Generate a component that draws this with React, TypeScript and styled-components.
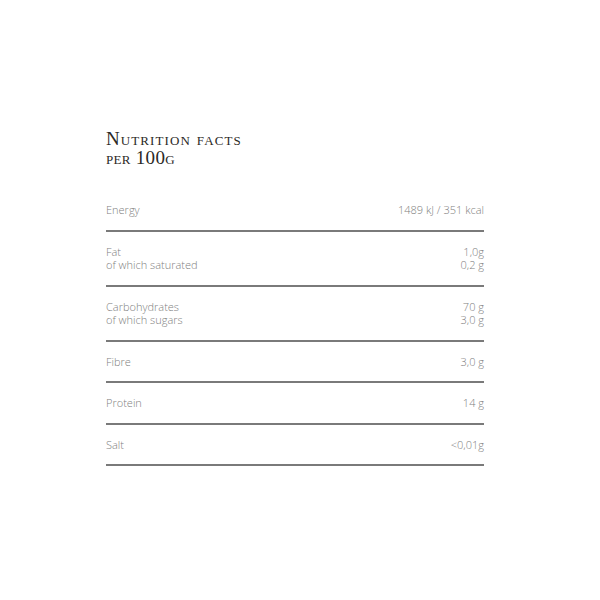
import React from "react";
import styled, { createGlobalStyle } from "styled-components";

const rows = [
  { items: [["Energy", "1489 kJ / 351 kcal"]] },
  { items: [["Fat", "1,0g"], ["of which saturated", "0,2 g"]] },
  { items: [["Carbohydrates", "70 g"], ["of which sugars", "3,0 g"]] },
  { items: [["Fibre", "3,0 g"]] },
  { items: [["Protein", "14 g"]] },
  { items: [["Salt", "<0,01g"]] },
];

export default () => {
  return (
    <>
      <GlobalStyle />
      <Page>
        <Card>
          <Title>
            <TitleLine $spacing={1.1}>Nutrition facts</TitleLine>
            <TitleLine $spacing={0.3}>per 100g</TitleLine>
          </Title>
          <Table>
            {rows.map((row, i) => (
              <Row key={i}>
                {row.items.map(([label, value]) => (
                  <Line key={label}>
                    <span>{label}</span>
                    <span>{value}</span>
                  </Line>
                ))}
              </Row>
            ))}
          </Table>
        </Card>
      </Page>
    </>
  );
};

const GlobalStyle = createGlobalStyle`
  body {
    margin: 0;
    background: #fff;
  }
`;

const Page = styled.div`
  width: 600px;
  height: 600px;
  box-sizing: border-box;
  padding: 129px 0 0 106px;
`;

const Card = styled.div`
  width: 378px;
`;

const Title = styled.h2`
  margin: 0 0 23px;
  font-family: "Liberation Serif", serif;
  font-variant: small-caps;
  font-weight: 400;
  font-size: 19px;
  line-height: 19px;
  color: #2b2926;
`;

const TitleLine = styled.span<{ $spacing: number }>`
  display: block;
  letter-spacing: ${(p) => p.$spacing}px;
`;

const Table = styled.div`
  display: flex;
  flex-direction: column;
`;

const Row = styled.div`
  padding: 13px 0;
  border-bottom: 2px solid #7a7a7a;
`;

const Line = styled.div`
  display: flex;
  justify-content: space-between;
  font-family: "Open Sans", sans-serif;
  font-weight: 300;
  font-size: 11px;
  line-height: 13.5px;
  color: #808080;
`;
